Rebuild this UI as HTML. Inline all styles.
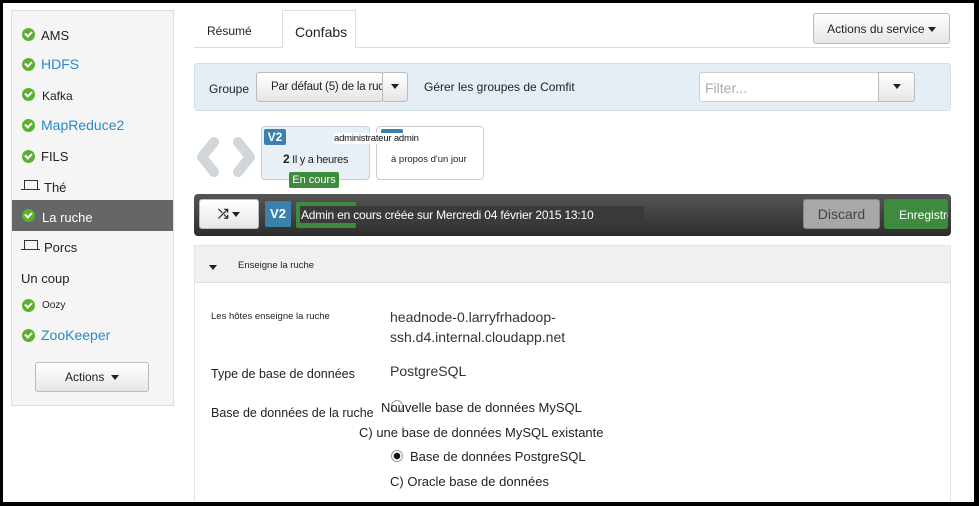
<!DOCTYPE html>
<html><head><meta charset="utf-8"><style>
*{box-sizing:border-box;margin:0;padding:0}
body{width:979px;height:506px;background:#000;font-family:"Liberation Sans",Arial,sans-serif;position:relative;overflow:hidden;color:#333}
#pg{position:absolute;left:3px;top:3px;width:971px;height:499px;background:#fff;overflow:hidden}
.a{position:absolute;white-space:nowrap}
.ck{position:absolute;width:13px;height:13px;border-radius:50%;background:#5cb030}
.ck:after{content:"";position:absolute;left:3px;top:3px;width:5px;height:3px;border-left:2px solid #fff;border-bottom:2px solid #fff;transform:rotate(-45deg)}
.lp{position:absolute;width:14px;height:9px;border:1.5px solid #333;border-bottom:none}
.lp:after{content:"";position:absolute;left:-4px;top:8px;width:19px;border-top:1.5px solid #333}
.btn{position:absolute;border:1px solid #bbb;border-radius:3px;background:linear-gradient(#fff,#e6e6e6);white-space:nowrap;overflow:hidden}
.tri{display:inline-block;border-left:4px solid transparent;border-right:4px solid transparent;border-top:5px solid #222;vertical-align:middle}
</style></head><body><div id="pg">
<div class="a" style="left:8px;top:7px;width:163px;height:396px;background:#f5f5f5;border:1px solid #ddd"></div>
<div class="ck" style="left:19px;top:25px"></div><div class="a" style="left:38px;top:25px;font-size:13px;color:#222">AMS</div>
<div class="ck" style="left:19px;top:55px"></div><div class="a" style="left:38px;top:53px;font-size:14px;color:#2a8ac8">HDFS</div>
<div class="ck" style="left:19px;top:85px"></div><div class="a" style="left:39px;top:86px;font-size:12px;color:#222">Kafka</div>
<div class="ck" style="left:19px;top:116px"></div><div class="a" style="left:38px;top:114px;font-size:14px;color:#2a8ac8">MapReduce2</div>
<div class="ck" style="left:19px;top:147px"></div><div class="a" style="left:38px;top:146px;font-size:13px;color:#222">FILS</div>
<div class="lp" style="left:21px;top:177px"></div><div class="a" style="left:41px;top:177px;font-size:13px;color:#222">Thé</div>
<div class="a" style="left:9px;top:197px;width:161px;height:31px;background:#666"></div>
<div class="ck" style="left:19px;top:206px"></div><div class="a" style="left:39px;top:207px;font-size:13px;color:#fff">La ruche</div>
<div class="lp" style="left:21px;top:237px"></div><div class="a" style="left:41px;top:237px;font-size:13px;color:#222">Porcs</div>
<div class="a" style="left:18px;top:268px;font-size:13px;color:#222">Un coup</div>
<div class="ck" style="left:19px;top:296px"></div><div class="a" style="left:39px;top:297px;font-size:10px;color:#222">Oozy</div>
<div class="ck" style="left:19px;top:326px"></div><div class="a" style="left:38px;top:324px;font-size:14px;color:#2a8ac8">ZooKeeper</div>
<div class="btn" style="left:32px;top:359px;width:114px;height:30px;text-align:center;line-height:29px;font-size:12px;color:#222">Actions &nbsp;<span class="tri"></span></div>
<div class="a" style="left:191px;top:44px;width:757px;border-top:1px solid #ddd"></div>
<div class="a" style="left:204px;top:21px;font-size:12px;color:#222">Résumé</div>
<div class="a" style="left:279px;top:7px;width:74px;height:38px;background:#fff;border:1px solid #ddd;border-bottom:none"></div>
<div class="a" style="left:292px;top:21px;font-size:14px;color:#222">Confabs</div>
<div class="btn" style="left:810px;top:10px;width:137px;height:31px;line-height:30px;text-align:center;font-size:12px;color:#222">Actions du service <span class="tri"></span></div>
<div class="a" style="left:191px;top:60px;width:757px;height:48px;background:#e4eef4;border:1px solid #d4e0e8;border-radius:3px"></div>
<div class="a" style="left:206px;top:79px;font-size:12px;color:#222">Groupe</div>
<div class="btn" style="left:253px;top:69px;width:128px;height:30px;line-height:29px;padding-left:14px;font-size:11.5px;letter-spacing:-0.2px;color:#222">Par défaut (5) de la ruche</div>
<div class="btn" style="left:379px;top:69px;width:26px;height:30px;text-align:center;line-height:27px"><span class="tri"></span></div>
<div class="a" style="left:421px;top:77px;font-size:12px;color:#222">Gérer les groupes de Comfit</div>
<div class="a" style="left:696px;top:69px;width:180px;height:30px;border:1px solid #ccc;border-radius:3px 0 0 3px;background:#fff;padding:7px 5px;font-size:14px;color:#aaa">Filter...</div>
<div class="btn" style="left:875px;top:69px;width:37px;height:30px;text-align:center;line-height:27px;border-radius:0 3px 3px 0"><span class="tri"></span></div>
<svg class="a" style="left:191px;top:131px" width="64" height="46" viewBox="0 0 64 46"><path d="M20 8 L8 23 L20 38 M44 8 L56 23 L44 38" stroke="#d0d6da" stroke-width="10" fill="none" stroke-linecap="round" stroke-linejoin="round"/></svg>
<div class="a" style="left:258px;top:123px;width:109px;height:54px;background:#e8f0f5;border:1px solid #ccd;border-radius:4px"></div>
<div class="a" style="left:261px;top:126px;width:22px;height:16px;background:#3a82ab;color:#fff;font-weight:bold;font-size:12px;text-align:center;line-height:16px;border-radius:2px">V2</div>
<div class="a" style="left:280px;top:149px;font-size:11px;color:#222;letter-spacing:-0.3px"><b style="font-size:12px">2</b> Il y a heures</div>
<div class="a" style="left:286px;top:169px;width:50px;height:16px;background:#3e8a3e;color:#fff;font-size:11px;text-align:center;line-height:16px;border-radius:2px">En cours</div>
<div class="a" style="left:373px;top:123px;width:108px;height:54px;background:#fff;border:1px solid #ccc;border-radius:4px"></div>
<div class="a" style="left:378px;top:126px;width:22px;height:8px;background:#3a82ab;border-radius:2px"></div>
<div class="a" style="left:331px;top:130px;font-size:9.5px;color:#111;background:#fff;letter-spacing:-0.2px">administrateur admin</div>
<div class="a" style="left:388px;top:151px;font-size:9.5px;color:#222">à propos d'un jour</div>
<div class="a" style="left:191px;top:191px;width:757px;height:42px;background:linear-gradient(#555,#2e2e2e);border-radius:4px"></div>
<div class="btn" style="left:196px;top:196px;width:60px;height:30px;text-align:center;line-height:28px;font-size:13px;color:#222;font-weight:bold">⤮ <span class="tri"></span></div>
<div class="a" style="left:262px;top:198px;width:26px;height:26px;background:#3a82ab;color:#fff;font-weight:bold;font-size:13px;text-align:center;line-height:26px;border-radius:2px">V2</div>
<div class="a" style="left:293px;top:199px;width:60px;height:26px;background:#3e8a3e;border-radius:2px"></div>
<div class="a" style="left:297px;top:203px;width:344px;height:17px;background:#3a3a3a"></div>
<div class="a" style="left:298px;top:205px;font-size:12px;color:#fff;letter-spacing:-0.2px">Admin en cours créée sur Mercredi 04 février 2015 13:10</div>
<div class="a" style="left:800px;top:196px;width:77px;height:30px;background:#a8a8a8;border:1px solid #888;border-radius:3px;color:#444;font-size:14px;text-align:center;line-height:28px">Discard</div>
<div class="a" style="left:881px;top:196px;width:64px;height:30px;background:#3e8a3e;border-radius:3px;color:#fff;font-size:12px;line-height:32px;padding-left:15px;overflow:hidden">Enregistrer</div>
<div class="a" style="left:191px;top:242px;width:757px;height:262px;border:1px solid #e4e4e4"></div>
<div class="a" style="left:192px;top:243px;width:755px;height:37px;background:#f0f0f0;border-bottom:1px solid #ddd"></div>
<div class="a" style="left:206px;top:256px"><span class="tri"></span></div>
<div class="a" style="left:235px;top:257px;font-size:9.5px;color:#222">Enseigne la ruche</div>
<div class="a" style="left:208px;top:308px;font-size:9.5px;color:#222">Les hôtes enseigne la ruche</div>
<div class="a" style="left:387px;top:304px;font-size:14px;color:#333;line-height:20px">headnode-0.larryfrhadoop-<br>ssh.d4.internal.cloudapp.net</div>
<div class="a" style="left:208px;top:364px;font-size:12.5px;color:#222">Type de base de données</div>
<div class="a" style="left:387px;top:360px;font-size:14px;color:#333">PostgreSQL</div>
<div class="a" style="left:208px;top:403px;font-size:12.5px;color:#222">Base de données de la ruche</div>
<div class="a" style="left:388px;top:397px;width:12px;height:12px;border-radius:50%;border:1px solid #999"></div>
<div class="a" style="left:378px;top:397px;font-size:13px;color:#222">Nouvelle base de données MySQL</div>
<div class="a" style="left:356px;top:422px;font-size:13px;color:#222">C) une base de données MySQL existante</div>
<div class="a" style="left:388px;top:447px;width:12px;height:12px;border-radius:50%;border:1px solid #999;background:radial-gradient(#111 0 3px,#fff 3.5px)"></div>
<div class="a" style="left:407px;top:446px;font-size:13px;color:#222">Base de données PostgreSQL</div>
<div class="a" style="left:387px;top:471px;font-size:13px;color:#222">C) Oracle base de données</div>
</div></body></html>
